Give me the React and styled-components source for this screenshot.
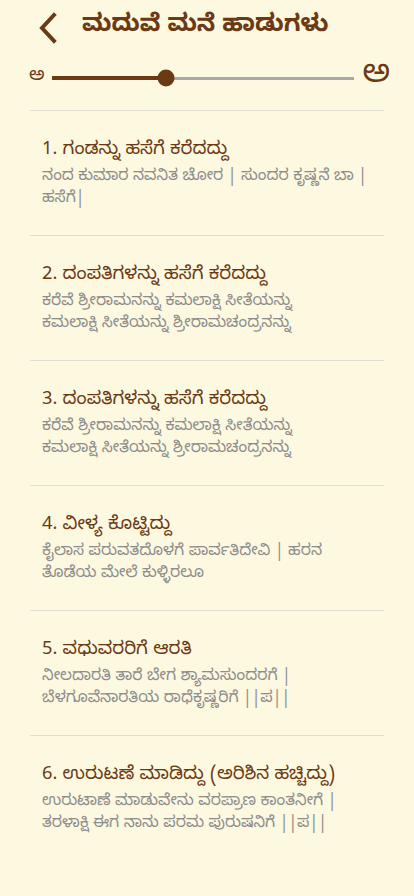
import React from "react";
import styled, { createGlobalStyle } from "styled-components";

const Global = createGlobalStyle`
  html, body { margin: 0; padding: 0; background: #fdf8e0; }
  body { font-family: "Noto Sans Kannada", "Noto Sans", sans-serif; }
`;

const Page = styled.div`
  width: 414px;
  min-height: 896px;
  background: #fdf8e0;
  box-sizing: border-box;
`;

const Header = styled.div`
  display: flex;
  align-items: center;
  height: 50px;
  padding: 6px 0 0 36px;
  gap: 22px;
  box-sizing: border-box;
`;

const BackButton = styled.button`
  border: none;
  background: none;
  padding: 0;
  width: 24px;
  height: 34px;
  display: flex;
  align-items: center;
  justify-content: center;
`;

const Title = styled.h1`
  margin: 0;
  font-size: 24px;
  font-weight: 700;
  color: #6b3a14;
  font-family: "Noto Sans Kannada", "Noto Sans", sans-serif;
`;

const SliderRow = styled.div`
  display: flex;
  align-items: center;
  padding: 2px 24px 0 29px;
  height: 54px;
  box-sizing: border-box;
`;

const Glyph = styled.span`
  font-size: ${(p) => (p.$big ? "32px" : "18px")};
  color: #6b3a14;
  line-height: 1;
  margin: ${(p) => (p.$big ? "0 0 0 8px" : "0 7px 0 0")};
`;

const Track = styled.div`
  position: relative;
  flex: 1;
  height: 3px;
  background: #a9a9a9;
`;

const Fill = styled.div`
  position: absolute;
  left: 0;
  top: -0.5px;
  height: 4px;
  background: #6b3a14;
`;

const Thumb = styled.div`
  position: absolute;
  top: 50%;
  width: 17px;
  height: 17px;
  border-radius: 50%;
  background: #6b3a14;
  transform: translate(-50%, -50%);
`;

const List = styled.div`
  margin: 6px 30px 0;
`;

const Item = styled.div`
  padding: 25px 12px 24px;
  border-top: 1px solid #e0ddd0;
`;

const ItemTitle = styled.div`
  font-size: 18.3px;
  line-height: 31px;
  color: #6b3a14;
`;

const ItemText = styled.div`
  font-size: 15.7px;
  line-height: 22px;
  color: #8c8c8c;
  white-space: pre-line;
`;

const songs = [
  ["1. ಗಂಡನ್ನು ಹಸೆಗೆ ಕರೆದದ್ದು", "ನಂದ ಕುಮಾರ ನವನಿತ ಚೋರ | ಸುಂದರ ಕೃಷ್ಣನೆ ಬಾ | ಹಸೆಗೆ|"],
  ["2. ದಂಪತಿಗಳನ್ನು ಹಸೆಗೆ ಕರೆದದ್ದು", "ಕರೆವೆ ಶ್ರೀರಾಮನನ್ನು ಕಮಲಾಕ್ಷಿ ಸೀತೆಯನ್ನು\nಕಮಲಾಕ್ಷಿ ಸೀತೆಯನ್ನು ಶ್ರೀರಾಮಚಂದ್ರನನ್ನು"],
  ["3. ದಂಪತಿಗಳನ್ನು ಹಸೆಗೆ ಕರೆದದ್ದು", "ಕರೆವೆ ಶ್ರೀರಾಮನನ್ನು ಕಮಲಾಕ್ಷಿ ಸೀತೆಯನ್ನು\nಕಮಲಾಕ್ಷಿ ಸೀತೆಯನ್ನು ಶ್ರೀರಾಮಚಂದ್ರನನ್ನು"],
  ["4. ವೀಳ್ಯ ಕೊಟ್ಟಿದ್ದು", "ಕೈಲಾಸ ಪರುವತದೊಳಗೆ ಪಾರ್ವತಿದೇವಿ | ಹರನ ತೊಡೆಯ ಮೇಲೆ ಕುಳ್ಳಿರಲೂ"],
  ["5. ವಧುವರರಿಗೆ ಆರತಿ", "ನೀಲದಾರತಿ ತಾರೆ ಬೇಗ ಶ್ಯಾಮಸುಂದರಗೆ |\nಬೆಳಗೂವೆನಾರತಿಯ ರಾಧೆಕೃಷ್ಣರಿಗೆ ||ಪ||"],
  ["6. ಉರುಟಣೆ ಮಾಡಿದ್ದು (ಅರಿಶಿನ ಹಚ್ಚಿದ್ದು)", "ಉರುಟಾಣೆ ಮಾಡುವೇನು ವರಪ್ರಾಣ ಕಾಂತನೀಗೆ |\nತರಳಾಕ್ಷಿ ಈಗ ನಾನು ಪರಮ ಪುರುಷನಿಗೆ ||ಪ||"],
];

export default function App() {
  const value = 0.378;
  return (
    <Page>
      <Global />
      <Header>
        <BackButton aria-label="back">
          <svg width="20" height="32" viewBox="0 0 20 32">
            <path d="M16 3 L4 16 L16 29" fill="none" stroke="#6b3a14" strokeWidth="4" strokeLinecap="square" />
          </svg>
        </BackButton>
        <Title>ಮದುವೆ ಮನೆ ಹಾಡುಗಳು</Title>
      </Header>
      <SliderRow>
        <Glyph>ಅ</Glyph>
        <Track>
          <Fill style={{ width: `${value * 100}%` }} />
          <Thumb style={{ left: `${value * 100}%` }} />
        </Track>
        <Glyph $big>ಅ</Glyph>
      </SliderRow>
      <List>
        {songs.map(([t, s]) => (
          <Item key={t}>
            <ItemTitle>{t}</ItemTitle>
            <ItemText>{s}</ItemText>
          </Item>
        ))}
      </List>
    </Page>
  );
}
